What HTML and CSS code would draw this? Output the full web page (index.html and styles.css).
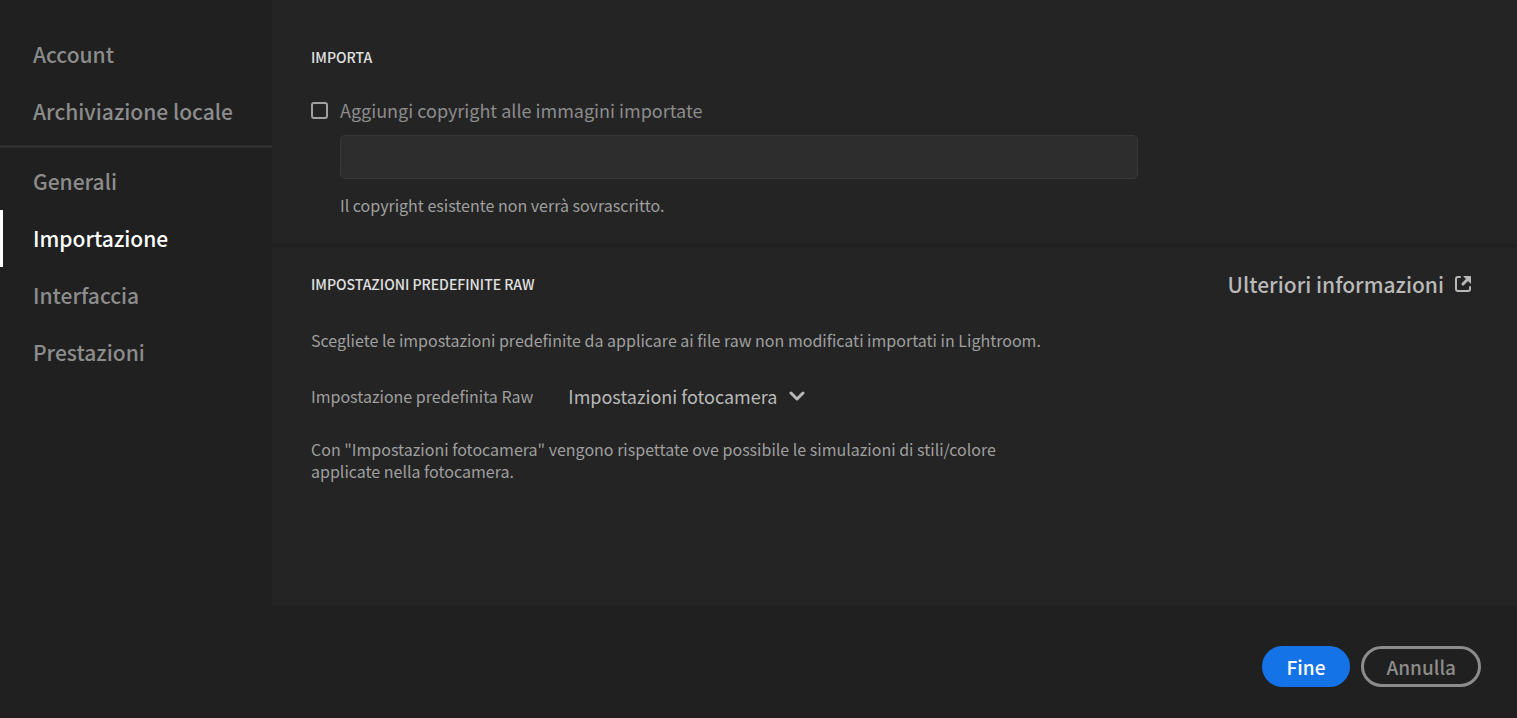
FILE: index.html
```html
<!DOCTYPE html>
<html lang="it">
<head>
  <meta charset="UTF-8">
  <meta name="viewport" content="width=device-width, initial-scale=1.0">
  <title>Preferenze</title>
  <link rel="stylesheet" href="styles.css">
</head>
<body>

  <div class="dialog">
    <nav class="sidebar">
      <a href="#account" class="nav-item">Account</a>
      <a href="#storage" class="nav-item">Archiviazione locale</a>
      <hr class="nav-divider">
      <a href="#general" class="nav-item">Generali</a>
      <a href="#import" class="nav-item active" aria-current="page">Importazione</a>
      <a href="#interface" class="nav-item">Interfaccia</a>
      <a href="#performance" class="nav-item">Prestazioni</a>
    </nav>

    <main class="content">
      <section class="section">
        <h2>IMPORTA</h2>
        <div class="check-row">
          <input type="checkbox" id="add-copyright">
          <label for="add-copyright">Aggiungi copyright alle immagini importate</label>
        </div>
        <div class="copyright">
          <input type="text" id="copyright" aria-label="Copyright">
          <p>Il copyright esistente non verrà sovrascritto.</p>
        </div>
      </section>

      <section class="section">
        <div class="section-head">
          <h2>IMPOSTAZIONI PREDEFINITE RAW</h2>
          <a href="#more" class="more">
            Ulteriori informazioni
            <svg width="18" height="18" viewBox="0 0 18 18" fill="none" stroke="currentColor" stroke-width="2" stroke-linecap="round">
              <path d="M6 2H4a2 2 0 0 0-2 2v10a2 2 0 0 0 2 2h10a2 2 0 0 0 2-2v-2" />
              <path d="M9 9l5-5" stroke-width="3" />
              <path d="M9 1h7a1 1 0 0 1 1 1v7z" fill="currentColor" stroke="none" />
            </svg>
          </a>
        </div>
        <p class="intro">Scegliete le impostazioni predefinite da applicare ai file raw non modificati importati in Lightroom.</p>
        <div class="preset-row">
          <label for="preset">Impostazione predefinita Raw</label>
          <div class="select">
            <select id="preset">
              <option>Impostazioni fotocamera</option>
            </select>
            <svg width="16" height="10" viewBox="0 0 16 10" fill="none" stroke="currentColor" stroke-width="3" stroke-linecap="round" stroke-linejoin="round">
              <path d="M2 2l6 6 6-6" />
            </svg>
          </div>
        </div>
        <p class="note">Con "Impostazioni fotocamera" vengono rispettate ove possibile le simulazioni di stili/colore applicate nella fotocamera.</p>
      </section>
    </main>

    <footer class="footer">
      <button type="button" class="btn btn-primary">Fine</button>
      <button type="button" class="btn btn-outline">Annulla</button>
    </footer>
  </div>

</body>
</html>
```
FILE: styles.css
```css
* {
  box-sizing: border-box;
}

body {
  margin: 0;
  background-color: #202020;
  color: #9f9f9f;
  font-family: "Noto Sans CJK SC", "Noto Sans", sans-serif;
  font-size: 16px;
  line-height: 22px;
}

h2,
p {
  margin: 0;
}

a {
  text-decoration: none;
}

.dialog {
  display: grid;
  grid-template-columns: 272px 1fr;
  grid-template-rows: 1fr auto;
  min-height: 100vh;
  border-bottom: 3px solid #241b20;
}

/* Sidebar */
.sidebar {
  padding-top: 26px;
}

.nav-item {
  display: block;
  padding: 0 30px;
  border-left: 3px solid transparent;
  color: #8c8c8c;
  font-size: 21px;
  font-weight: 500;
  line-height: 57px;
  white-space: nowrap;
}

.nav-item.active {
  border-left-color: #fff;
  color: #fff;
}

.nav-divider {
  height: 3px;
  margin: 5px 0;
  border: none;
  background-color: #2e2e2e;
}

/* Content */
.content {
  background-color: #242424;
}

.section {
  padding: 26px 45px 28px 39px;
}

.section:first-child {
  padding-top: 46px;
  border-bottom: 3px solid #202020;
}

h2 {
  color: #e0e0e0;
  font-size: 14px;
  font-weight: 500;
}

.check-row {
  display: flex;
  align-items: center;
  gap: 12px;
  margin-top: 28px;
  color: #8c8c8c;
  font-size: 18px;
  line-height: 28px;
}

.check-row input {
  appearance: none;
  width: 17px;
  height: 17px;
  margin: 0;
  border: 2px solid #a0a0a0;
  border-radius: 3px;
}

.copyright {
  max-width: 827px;
  margin-top: 11px;
  padding-left: 29px;
}

.copyright input {
  display: block;
  width: 100%;
  height: 44px;
  padding: 0 12px;
  border: 1px solid #383838;
  border-radius: 5px;
  background-color: #2d2d2d;
  color: #e0e0e0;
  font: inherit;
}

.copyright p {
  margin-top: 15px;
}

.section-head {
  display: flex;
  align-items: center;
  justify-content: space-between;
}

.more {
  display: flex;
  align-items: center;
  gap: 10px;
  color: #b9b9b9;
  font-size: 21px;
  font-weight: 500;
}

.intro {
  margin-top: 34px;
}

.preset-row {
  display: flex;
  align-items: center;
  gap: 35px;
  margin-top: 31px;
}

.select {
  display: flex;
  align-items: center;
  gap: 12px;
  color: #b9b9b9;
}

.select select {
  appearance: none;
  height: 28px;
  padding: 0;
  border: none;
  background: none;
  color: inherit;
  font-family: inherit;
  font-size: 18px;
}

.note {
  max-width: 700px;
  margin-top: 28px;
}

/* Footer */
.footer {
  grid-column: 1 / -1;
  display: flex;
  justify-content: flex-end;
  gap: 11px;
  padding: 41px 36px 28px;
}

.btn {
  height: 41px;
  padding: 0 22px;
  border: 3px solid #8c8c8c;
  border-radius: 21px;
  background: none;
  color: #8c8c8c;
  font-family: inherit;
  font-size: 19px;
  font-weight: 500;
  line-height: 35px;
}

.btn-primary {
  border-color: #1473e6;
  background-color: #1473e6;
  color: #fff;
}
```
